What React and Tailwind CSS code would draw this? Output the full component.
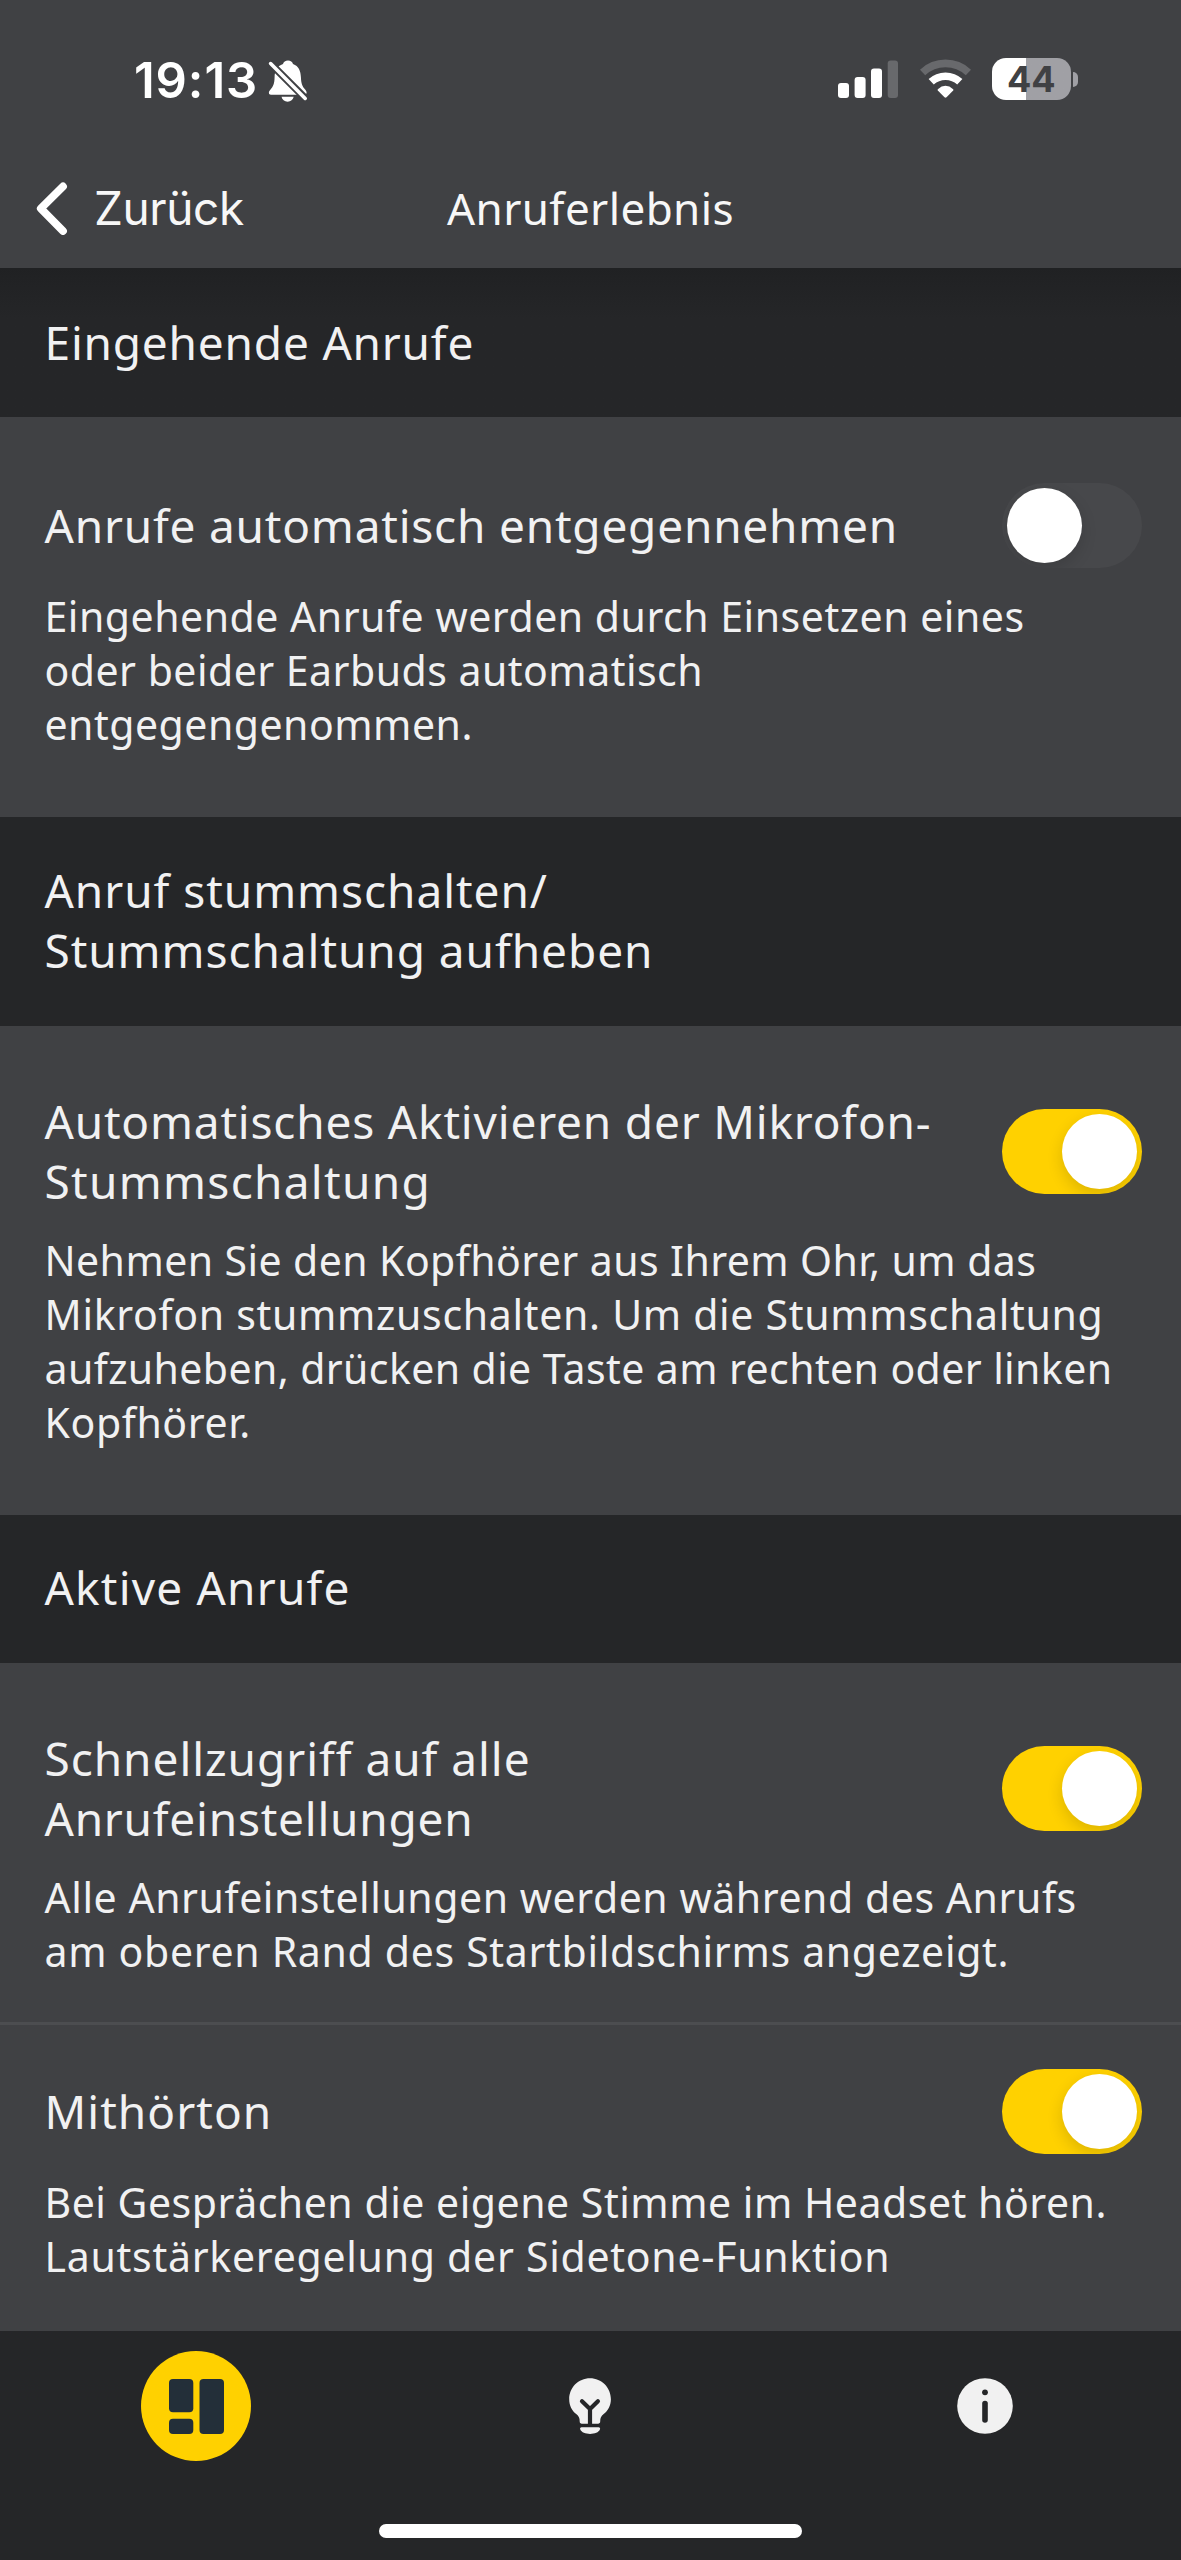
import React from 'react';

function BellOff() {
  return (
    <svg className="mt-[9.500px] h-[42px] w-[40px]" viewBox="0 0 40 42" fill="#fff">
      <path d="M20 0.500c-2.600 0-4.400 1.400-5 3.400C9 6 6.700 11 6.600 17c-.1 7-1.600 9.500-3.900 12.200C1.200 31 .9 31.600.9 33c0 1 .8 1.700 2 1.700h33.500c1.300 0 2.200-.8 2.200-1.900 0-1.300-.6-2.100-1.900-3.700-2.300-2.700-3.600-5.200-3.800-12C32.700 11 30.800 6 25 3.900 24.400 1.900 22.600.5 20 .5z" />
      <path d="M13.500 36.800h12.200c-.6 2.900-3 4.900-6.100 4.900s-5.500-2-6.100-4.900z" />
      <path d="M-0.500 0.500L40 41" stroke="#404144" strokeWidth="7.400" />
      <path d="M2.600 3.600L37.200 38.400" stroke="#fff" strokeWidth="3.600" strokeLinecap="round" />
    </svg>
  );
}

function Signal() {
  return (
    <svg className="mt-[10px] h-[38px] w-[60px]" viewBox="0 0 60 38" fill="#fff">
      <rect x="0" y="23" width="11" height="15" rx="3" />
      <rect x="16.600" y="17" width="11" height="21" rx="3" />
      <rect x="33" y="8.500" width="11" height="29.500" rx="3" />
      <rect x="49.700" y="0.500" width="10.300" height="37.500" rx="3" fill="#68696c" />
    </svg>
  );
}

function Wifi() {
  return (
    <svg className="mt-[9px] ml-[21px] h-[39px] w-[53px]" viewBox="0 0 53 39">
      <path d="M3.600 13.400A33.500 33.500 0 0 1 49.400 13.400" fill="none" stroke="#68696c" strokeWidth="7.600" />
      <path d="M12.200 22.800A21 21 0 0 1 40.800 22.800" fill="none" stroke="#fff" strokeWidth="7.600" />
      <path d="M18.800 30.200Q26.500 23.400 34.200 30.200Q34.700 30.900 34.200 31.500L27.500 38.300Q26.500 39 25.500 38.300L18.800 31.500Q18.300 30.900 18.800 30.200z" fill="#fff" />
    </svg>
  );
}

function Battery() {
  return (
    <div className="mt-[8px] ml-[20px] flex items-center">
      <div className="flex h-[42px] w-[78.500px] items-center justify-center rounded-[14px] bg-linear-to-r from-white from-[43.500%] to-[#a0a0a5] to-[43.500%]">
        <span className="font-['Inter',sans-serif] text-[36px] leading-[42px] font-bold text-[#404144]">44</span>
      </div>
      <div className="ml-[2.500px] h-[15px] w-[5px] rounded-r-full bg-[#a0a0a5]" />
    </div>
  );
}

function Toggle({ on }) {
  return (
    <div className={on ? 'flex h-[85px] w-[140px] shrink-0 items-center justify-end overflow-hidden rounded-full bg-[#ffd100] p-[5px]' : 'flex h-[85px] w-[140px] shrink-0 items-center overflow-hidden rounded-full bg-[#47484b] p-[5px]'}>
      <div className="size-[75px] rounded-full bg-white shadow-[0_6px_16px_rgba(0,0,0,0.14)]" />
    </div>
  );
}

function Lines({ items }) {
  return items.map(([text, tracking]) => (
    <span key={text} className={'block whitespace-nowrap ' + tracking}>{text}</span>
  ));
}

function SectionTitle({ items, className = '' }) {
  return (
    <h2 className={'bg-[#252628] pl-[44.5px] text-[46px] leading-[60.5px] ' + className}>
      <Lines items={items} />
    </h2>
  );
}

function Setting({ title, text, on, className }) {
  return (
    <section className={'pl-[44.5px] pr-[39px] ' + className}>
      <div className="flex items-center justify-between">
        <h3 className="text-[46px] leading-[60.5px]"><Lines items={title} /></h3>
        <Toggle on={on} />
      </div>
      <p className="mt-[21px] text-[41px] leading-[54px]"><Lines items={text} /></p>
    </section>
  );
}

export default function App() {
  return (
    <div className="flex h-[2560px] w-[1181px] flex-col overflow-hidden bg-[#404144] font-['Noto_Sans',sans-serif] text-[#f1f1f2]">
      <header className="h-[268px] shrink-0 pt-[50px]">
        <div className="flex h-[60px] items-start justify-between pr-[103px] pl-[134px]">
          <div className="flex items-start">
            <span className="w-[134px] font-['Inter',sans-serif] text-[49px] leading-[61px] font-semibold tracking-[0.9px] text-white">19:13</span>
            <BellOff />
          </div>
          <div className="flex items-start">
            <Signal />
            <Wifi />
            <Battery />
          </div>
        </div>
        <div className="mt-[67px] grid grid-cols-[1fr_auto_1fr] items-center text-[44px] leading-[60px] text-[#f7f7f7]">
          <div className="flex items-center pl-[36px]">
            <svg className="h-[54px] w-[32px]" viewBox="0 0 32 54" fill="none" stroke="#fff" strokeWidth="7.800" strokeLinecap="round" strokeLinejoin="round">
              <path d="M27 5.500L4.800 27.500L27 50" />
            </svg>
            <span className="ml-[26px] font-['Inter',sans-serif] text-[46px] tracking-[-0.4px]">Zurück</span>
          </div>
          <h1 className="pt-px tracking-[0.4px]">Anruferlebnis</h1>
          <span />
        </div>
      </header>

      <SectionTitle className="h-[148.5px] shrink-0 bg-linear-to-b from-[#202123] to-[#252628] to-[50px] pt-[43.5px]" items={[['Eingehende Anrufe', 'tracking-[0.8px]']]} />
      <Setting
        className="h-[400.5px] shrink-0 pt-[66px]"
        title={[['Anrufe automatisch entgegennehmen', 'tracking-[0.79px]']]}
        text={[
          ['Eingehende Anrufe werden durch Einsetzen eines', 'tracking-[0.52px]'],
          ['oder beider Earbuds automatisch', 'tracking-[0.48px]'],
          ['entgegengenommen.', 'tracking-[0.5px]'],
        ]}
      />
      <SectionTitle className="h-[208.5px] shrink-0 pt-[42.5px]" items={[['Anruf stummschalten/', 'tracking-[0.95px]'], ['Stummschaltung aufheben', 'tracking-[0.94px]']]} />
      <Setting
        on
        className="h-[489px] shrink-0 pt-[65px]"
        title={[['Automatisches Aktivieren der Mikrofon-', 'tracking-[0.81px]'], ['Stummschaltung', 'tracking-[1.3px]']]}
        text={[
          ['Nehmen Sie den Kopfhörer aus Ihrem Ohr, um das', 'tracking-[0.42px]'],
          ['Mikrofon stummzuschalten. Um die Stummschaltung', 'tracking-[0.69px]'],
          ['aufzuheben, drücken die Taste am rechten oder linken', 'tracking-[0.4px]'],
          ['Kopfhörer.', 'tracking-[0.6px]'],
        ]}
      />
      <SectionTitle className="h-[148.5px] shrink-0 pt-[42.5px]" items={[['Aktive Anrufe', 'tracking-[1.19px]']]} />
      <Setting
        on
        className="h-[362px] shrink-0 border-b-[3px] border-[#4c4d50] pt-[64.5px]"
        title={[['Schnellzugriff auf alle', 'tracking-[0.95px]'], ['Anrufeinstellungen', 'tracking-[0.76px]']]}
        text={[
          ['Alle Anrufeinstellungen werden während des Anrufs', 'tracking-[0.56px]'],
          ['am oberen Rand des Startbildschirms angezeigt.', 'tracking-[0.68px]'],
        ]}
      />
      <Setting
        on
        className="h-[306px] shrink-0 pt-[43.5px]"
        title={[['Mithörton', 'tracking-[1.05px]']]}
        text={[
          ['Bei Gesprächen die eigene Stimme im Headset hören.', 'tracking-[0.52px]'],
          ['Lautstärkeregelung der Sidetone-Funktion', 'tracking-[0.73px]'],
        ]}
      />

      <nav className="flex flex-1 flex-col items-center bg-[#252628] pt-[20px]">
        <div className="grid w-full grid-cols-3 items-center justify-items-center">
          <div className="mr-[1.5px] flex size-[110px] items-center justify-center rounded-full bg-[#ffd100]">
            <svg className="size-[55px]" viewBox="0 0 55 55" fill="#232f39">
              <rect width="24.300" height="33.300" rx="4" />
              <rect y="39.700" width="24.300" height="15.300" rx="4" />
              <rect x="30.500" width="24.500" height="55" rx="4" />
            </svg>
          </div>
          <svg className="h-[56px] w-[42px]" viewBox="0 0 42 56" fill="#f1f1f1">
            <path d="M21 0.300C9.400.3.200 9.600.2 21.200c0 6.300 2.700 11.200 7 14.900 2.600 2.200 3.500 4 3.500 7.400 0 1.300.8 2.200 2.100 2.200h16.300c1.300 0 2.100-.9 2.100-2.200 0-3.400.9-5.200 3.500-7.400 4.400-3.700 7.200-8.600 7.200-14.900C41.900 9.600 32.600.3 21 .3z" />
            <path d="M12.500 49.300h17.200c1.100 0 1.700 1 1.300 2-1.300 3.300-5.300 4.600-9.900 4.600s-8.600-1.300-9.900-4.600c-.4-1 .2-2 1.300-2z" />
            <path d="M13 23.200L21 31L28.900 23.200M21 30V46" fill="none" stroke="#252628" strokeWidth="4.200" strokeLinecap="round" strokeLinejoin="round" />
          </svg>
          <svg className="ml-px size-[56px]" viewBox="0 0 56 56">
            <circle cx="28" cy="28" r="27.800" fill="#f1f1f1" />
            <circle cx="28" cy="14.300" r="2.900" fill="#252628" />
            <path d="M28 25.500V42" stroke="#252628" strokeWidth="5.600" strokeLinecap="round" />
          </svg>
        </div>
        <div className="mt-[63px] h-[14px] w-[423px] rounded-full bg-white" />
      </nav>
    </div>
  );
}
